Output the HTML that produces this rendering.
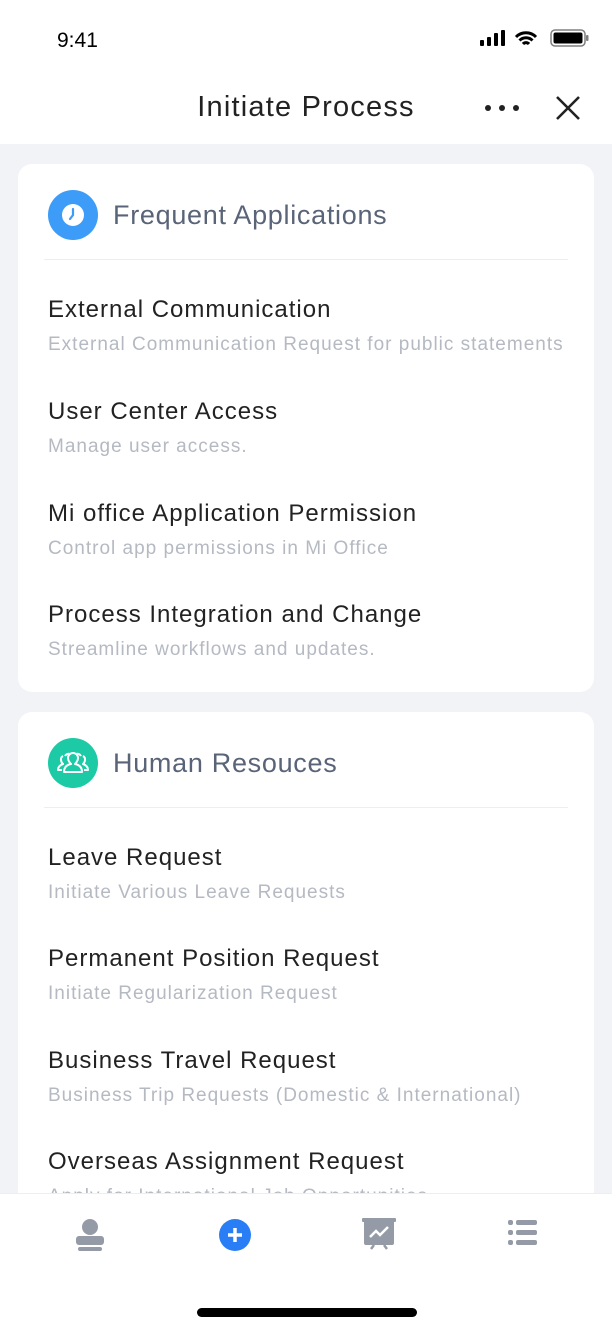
<!DOCTYPE html>
<html><head><style>
*{margin:0;padding:0;box-sizing:border-box}
body{width:612px;height:1332px;background:#f2f3f7;font-family:"Liberation Sans",sans-serif;position:relative;overflow:hidden}
.top{position:absolute;left:0;top:0;width:612px;height:144px;background:#fff}
.time{position:absolute;left:57px;top:29px;font-size:21px;color:#000}
.title{position:absolute;left:0;width:612px;top:91px;text-align:center;font-size:29px;letter-spacing:1.2px;color:#222}
.card{position:absolute;left:18px;width:576px;background:#fff;border-radius:14px}
.hd{position:absolute;left:30px;top:26px;height:50px;display:flex;align-items:center}
.ic{width:50px;height:50px;border-radius:25px;margin-right:15px;display:flex;align-items:center;justify-content:center}
.hd span{font-size:27px;letter-spacing:0.7px;color:#5a6478}
.line{position:absolute;left:26px;right:26px;top:95px;border-top:1px solid #eceef2}
.it{position:absolute;left:30px;white-space:nowrap}
.it b{display:block;font-weight:normal;font-size:24px;letter-spacing:1px;color:#222;line-height:28px}
.it i{display:block;font-style:normal;font-size:19px;letter-spacing:1px;color:#b5b9c2;line-height:22px;margin-top:10px}
.tab{position:absolute;left:0;top:1193px;width:612px;height:139px;background:#fff;border-top:1px solid #eee}
</style></head><body>
<div class="top">
<div class="time">9:41</div>
<svg style="position:absolute;left:480px;top:29px" width="110" height="20"><rect x="0" y="11" width="4" height="6" rx="1"/><rect x="7" y="8" width="4" height="9" rx="1"/><rect x="14" y="4" width="4" height="13" rx="1"/><rect x="21" y="1" width="4" height="16" rx="1"/><path d="M36 8a14 14 0 0 1 20 0M39.5 11.5a9 9 0 0 1 13 0M43 15a4 4 0 0 1 6 0" stroke="#000" stroke-width="3" fill="none"/><rect x="71" y="1" width="34" height="16" rx="4" fill="none" stroke="#000" stroke-width="1.5" opacity=".5"/><rect x="73.5" y="3.5" width="29" height="11" rx="2"/><rect x="106" y="6" width="2.5" height="6" rx="1" opacity=".5"/></svg>
<div class="title">Initiate Process</div>
<svg style="position:absolute;left:484px;top:100px" width="36" height="16"><circle cx="4" cy="8" r="3" fill="#222"/><circle cx="18" cy="8" r="3" fill="#222"/><circle cx="32" cy="8" r="3" fill="#222"/></svg>
<svg style="position:absolute;left:555px;top:95px" width="26" height="26"><path d="M2 2L24 24M24 2L2 24" stroke="#222" stroke-width="2.6"/></svg>
</div>

<div class="card" style="top:164px;height:528px">
<div class="hd"><div class="ic" style="background:#3d9cf8"><svg width="26" height="26"><circle cx="13" cy="13" r="11" fill="#fff"/><path d="M13 7v6l-3 4" stroke="#3d9cf8" stroke-width="2.2" fill="none" stroke-linecap="round"/></svg></div><span>Frequent Applications</span></div>
<div class="line"></div>
<div class="it" style="top:132px"><b>External Communication</b><i>External Communication Request for public statements</i></div>
<div class="it" style="top:234px"><b>User Center Access</b><i>Manage user access.</i></div>
<div class="it" style="top:336px"><b>Mi office Application Permission</b><i>Control app permissions in Mi Office</i></div>
<div class="it" style="top:437px"><b>Process Integration and Change</b><i>Streamline workflows and updates.</i></div>
</div>

<div class="card" style="top:712px;height:600px">
<div class="hd"><div class="ic" style="background:#1dcaa6"><svg width="34" height="28" fill="none" stroke="#fff" stroke-width="2" stroke-linejoin="round"><path d="M9 7a4 4 0 0 1 5-2M6 21H2c0-3 2-5 5-6-1-1-2-2-2-4a4 4 0 0 1 2-4"/><path d="M25 7a4 4 0 0 0-5-2M28 21h4c0-3-2-5-5-6 1-1 2-2 2-4a4 4 0 0 0-2-4"/><path d="M17 4a5 5 0 0 1 5 5c0 3-2 5-3 6 5 1 7 4 7 8H8c0-4 2-7 7-8-1-1-3-3-3-6a5 5 0 0 1 5-5z" fill="#1dcaa6"/></svg></div><span>Human Resouces</span></div>
<div class="line"></div>
<div class="it" style="top:132px"><b>Leave Request</b><i>Initiate Various Leave Requests</i></div>
<div class="it" style="top:233px"><b>Permanent Position Request</b><i>Initiate Regularization Request</i></div>
<div class="it" style="top:335px"><b>Business Travel Request</b><i>Business Trip Requests (Domestic &amp; International)</i></div>
<div class="it" style="top:436px"><b>Overseas Assignment Request</b><i>Apply for International Job Opportunities</i></div>
</div>

<div class="tab">
<svg style="position:absolute;left:74px;top:24px" width="32" height="34" fill="#959ba6"><circle cx="16" cy="9" r="8"/><rect x="2" y="18" width="28" height="9" rx="3"/><rect x="4" y="29" width="24" height="4" rx="2"/></svg>
<svg style="position:absolute;left:218px;top:24px" width="34" height="34"><circle cx="17" cy="17" r="16" fill="#2a7ef5"/><path d="M17 10v14M10 17h14" stroke="#fff" stroke-width="3.5"/></svg>
<svg style="position:absolute;left:362px;top:24px" width="34" height="34" fill="#959ba6"><rect x="0" y="0" width="34" height="4" rx="1"/><rect x="2" y="2" width="30" height="25" rx="2"/><path d="M8 19l6-6 4 4 8-8" stroke="#fff" stroke-width="2.5" fill="none"/><path d="M12 27l-3 4M22 27l3 4" stroke="#959ba6" stroke-width="2.5"/></svg>
<svg style="position:absolute;left:508px;top:25px" width="30" height="30" fill="#959ba6"><rect x="0" y="1" width="5" height="5" rx="2"/><rect x="8" y="1" width="21" height="5" rx="2"/><rect x="0" y="11" width="5" height="5" rx="2"/><rect x="8" y="11" width="21" height="5" rx="2"/><rect x="0" y="21" width="5" height="5" rx="2"/><rect x="8" y="21" width="21" height="5" rx="2"/></svg>
<div style="position:absolute;left:197px;top:114px;width:220px;height:9px;border-radius:5px;background:#000"></div>
</div>
</body></html>
